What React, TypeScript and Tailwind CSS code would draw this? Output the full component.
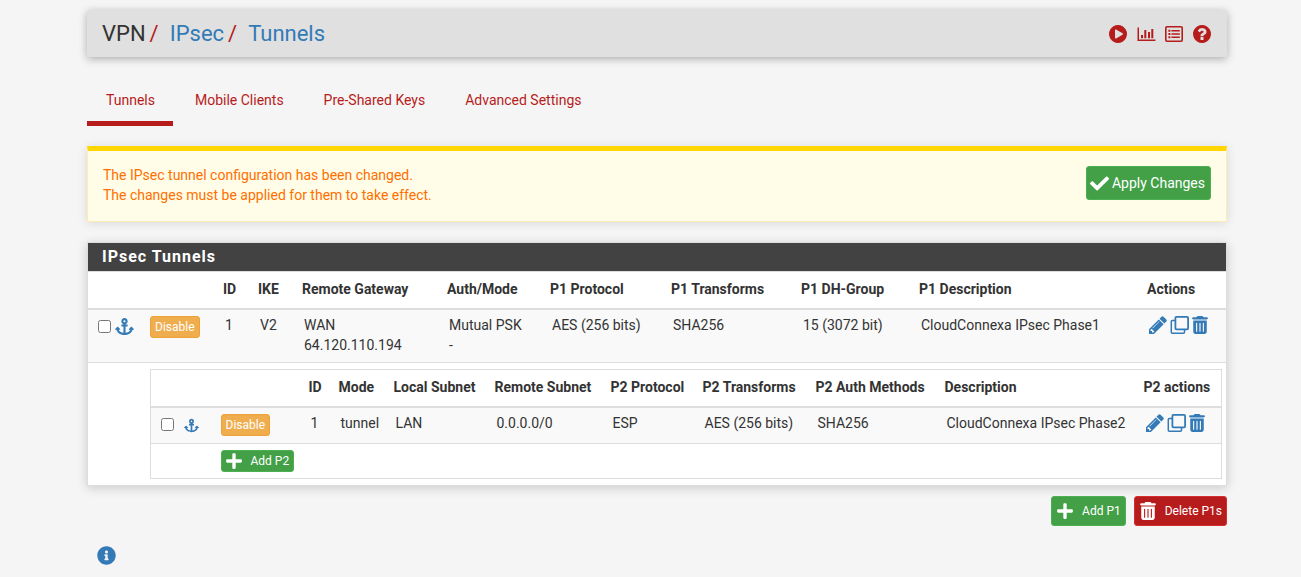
import type { ReactNode } from "react";
import { FaAnchor, FaCheck, FaInfoCircle, FaPlus } from "react-icons/fa";
import { FaTrashCan } from "react-icons/fa6";

const tabs = ["Tunnels", "Mobile Clients", "Pre-Shared Keys", "Advanced Settings"];

function PlayCircle() {
  return (
    <svg viewBox="128 128 1536 1536" fill="currentColor" className="size-[18px]" aria-hidden="true">
      <path d="M896 128q209 0 385.5 103t279.5 279.5 103 385.5-103 385.5-279.5 279.5-385.5 103-385.5-103-279.5-279.5-103-385.5 103-385.5 279.5-279.5 385.5-103zm384 823q32-18 32-55t-32-55l-544-320q-31-19-64-1-32 19-32 56v640q0 37 32 56 16 8 32 8 17 0 32-9z" />
    </svg>
  );
}

function QuestionCircle() {
  return (
    <svg viewBox="128 128 1536 1536" fill="currentColor" className="size-[18px]" aria-hidden="true">
      <path d="M1024 1376v-192q0-14-9-23t-23-9h-192q-14 0-23 9t-9 23v192q0 14 9 23t23 9h192q14 0 23-9t9-23zm256-672q0-88-55.5-163t-138.5-116-170-41q-243 0-371 213-15 24 8 42l132 100q7 6 19 6 16 0 25-12 53-68 86-92 34-24 86-24 48 0 85.5 26t37.5 59q0 38-20 61t-68 45q-63 28-115.5 86.5t-52.5 125.5v36q0 14 9 23t23 9h192q14 0 23-9t9-23q0-19 21.5-49.5t54.5-49.5q32-18 49-28.5t46-35 44.5-48 28-60.5 12.5-81zm384 192q0 209-103 385.5t-279.5 279.5-385.5 103-385.5-103-279.5-279.5-103-385.5 103-385.5 279.5-279.5 385.5-103 385.5 103 279.5 279.5 103 385.5z" />
    </svg>
  );
}

function BarChart() {
  return (
    <svg viewBox="0 0 19 16" fill="currentColor" className="h-4 w-[19px]" aria-hidden="true">
      <path d="M0.5 1.5H2v12h16.5V15H.5zM4 9h2v3.2H4zM7.3 4h2v8.2h-2zM11 6h2v6.2h-2zM14.3 3h2v9.2h-2z" />
    </svg>
  );
}

function ListPanel() {
  return (
    <svg viewBox="0 0 18 16" fill="none" className="h-4 w-[18px]" aria-hidden="true">
      <rect x="0.8" y="0.8" width="16.4" height="14.4" rx="1.2" stroke="currentColor" strokeWidth="1.6" />
      <path fill="currentColor" d="M3.4 3.7h2v2h-2zM3.4 7h2v2h-2zM3.4 10.3h2v2h-2zM6.4 3.9h8.4v1.6H6.4zM6.4 7.2h8.4v1.6H6.4zM6.4 10.5h8.4v1.6H6.4z" />
    </svg>
  );
}

function PencilIcon() {
  return (
    <svg viewBox="128 128 1536 1536" fill="currentColor" className="size-[18px]" aria-hidden="true">
      <path d="M491 1536l91-91-235-235-91 91v107h128v128h107zm523-928q0-22-22-22-10 0-17 7l-542 542q-7 7-7 17 0 22 22 22 10 0 17-7l542-542q7-7 7-17zm-54-192l416 416-832 832h-416v-416zm683 96q0 53-37 90l-166 166-416-416 166-165q36-38 90-38 53 0 91 38l235 234q37 39 37 91z" />
    </svg>
  );
}

function CloneIcon() {
  return (
    <svg viewBox="0 0 19 18" fill="none" stroke="currentColor" strokeWidth="1.8" className="h-[18px] w-[19px]" aria-hidden="true">
      <rect x="5.4" y="0.9" width="12.7" height="12.4" rx="1" />
      <path strokeWidth="1.5" d="M5 4.4H2.3a1 1 0 0 0-1 1v10.8a1 1 0 0 0 1 1h11.2a1 1 0 0 0 1-1V13.6" />
    </svg>
  );
}

function HeaderLink({ label, children }: { label: string; children: ReactNode }) {
  return (
    <a href="#" aria-label={label} className="flex w-5 justify-center">
      {children}
    </a>
  );
}

function Th({ children }: { children?: ReactNode }) {
  return <th className="px-[5px] pt-[7px] pb-[9px] text-left font-bold">{children}</th>;
}

function Td({ children }: { children?: ReactNode }) {
  return <td className="px-[7px] pt-[5px] pb-[7px] align-top">{children}</td>;
}

function DisableButton() {
  return (
    <button type="button" className="mt-px block h-[22px] rounded-[3px] border border-[#eea236] bg-[#f0ad4e] px-1 text-xs text-white">
      Disable
    </button>
  );
}

function RowActions() {
  return (
    <div className="flex h-5 items-center gap-[3px] text-[#337ab7]">
      <a href="#" aria-label="Edit"><PencilIcon /></a>
      <a href="#" aria-label="Copy"><CloneIcon /></a>
      <a href="#" aria-label="Delete"><FaTrashCan className="h-[18px] w-4" /></a>
    </div>
  );
}

function Phase2Table() {
  return (
    <table className="w-full table-fixed border border-[#ddd] whitespace-nowrap">
      <colgroup>
        <col className="w-[63px]" />
        <col className="w-[90px]" />
        <col className="w-[30px]" />
        <col className="w-[55px]" />
        <col className="w-[101px]" />
        <col className="w-[116px]" />
        <col className="w-[92px]" />
        <col className="w-[113px]" />
        <col className="w-[129px]" />
        <col />
        <col className="w-[83px]" />
      </colgroup>
      <thead>
        <tr className="border-b-2 border-[#ddd]">
          <Th />
          <Th />
          <Th>ID</Th>
          <Th>Mode</Th>
          <Th>Local Subnet</Th>
          <Th>Remote Subnet</Th>
          <Th>P2 Protocol</Th>
          <Th>P2 Transforms</Th>
          <Th>P2 Auth Methods</Th>
          <Th>Description</Th>
          <Th>P2 actions</Th>
        </tr>
      </thead>
      <tbody>
        <tr className="border-b border-[#ddd] bg-[#f9f9f9]">
          <Td>
            <div className="flex h-[22px] items-center gap-[10px] pl-[3px]">
              <input type="checkbox" aria-label="Select phase 2 entry 1" className="size-[13px]" />
              <a href="#" aria-label="Move phase 2 entries here" className="pt-[3px] text-[15px] text-[#337ab7]"><FaAnchor /></a>
            </div>
          </Td>
          <Td><DisableButton /></Td>
          <Td>1</Td>
          <Td>tunnel</Td>
          <Td>LAN</Td>
          <Td>0.0.0.0/0</Td>
          <Td>ESP</Td>
          <Td>AES (256 bits)</Td>
          <Td>SHA256</Td>
          <Td>CloudConnexa IPsec Phase2</Td>
          <Td><RowActions /></Td>
        </tr>
        <tr>
          <Td />
          <td colSpan={10} className="px-[7px] pt-[6px] pb-[6px]">
            <button type="button" className="flex h-[22px] items-center gap-2 rounded-[3px] border border-[#4caf50] bg-[#43a047] pr-1 pl-[3px] text-xs text-white">
              <FaPlus className="size-[18px]" />
              Add P2
            </button>
          </td>
        </tr>
      </tbody>
    </table>
  );
}

export default function App() {
  return (
    <div className="min-h-screen bg-[#f5f5f5] pt-[10px] pr-[74px] pb-3 pl-[87px] font-['Roboto',sans-serif] text-sm leading-5 text-[#333]">
      <header className="flex h-[47px] items-center justify-between rounded-[2px] bg-[#e0e0e0] px-[15px] shadow-[0_2px_8px_rgba(0,0,0,0.3)]">
        <nav aria-label="Breadcrumb" className="flex text-[22px] leading-6 text-[#b71c1c]">
          <span className="text-[#333]">VPN</span>
          <span className="pr-[11px] pl-1">/</span>
          <a href="#" className="text-[#337ab7]">IPsec</a>
          <span className="pr-[11px] pl-1">/</span>
          <a href="#" className="text-[#337ab7]">Tunnels</a>
        </nav>
        <div className="flex items-center gap-2 text-[#b71c1c]">
          <HeaderLink label="Service status"><PlayCircle /></HeaderLink>
          <HeaderLink label="IPsec status"><BarChart /></HeaderLink>
          <HeaderLink label="Logs"><ListPanel /></HeaderLink>
          <HeaderLink label="Help"><QuestionCircle /></HeaderLink>
        </div>
      </header>

      <nav aria-label="Sections" className="mt-[23px] flex gap-[3px] text-[#b71c1c]">
        {tabs.map((tab, index) => (
          <a
            key={tab}
            href="#"
            className={
              index === 0
                ? "border-b-[5px] border-[#b71c1c] pt-[10px] pr-[18px] pb-[11px] pl-[19px]"
                : "border-b-[5px] border-transparent pt-[10px] pr-[18px] pb-[11px] pl-[19px]"
            }
          >
            {tab}
          </a>
        ))}
      </nav>

      <section className="mt-5 flex items-start justify-between border border-t-[5px] border-[#ffecb3] border-t-[#ffd600] bg-[#fffde7] px-[15px] pt-[14px] shadow-[0_1px_10px_rgba(0,0,0,0.12)]">
        <p className="pb-4 text-[#ff6f00]">
          The IPsec tunnel configuration has been changed.
          <br />
          The changes must be applied for them to take effect.
        </p>
        <button type="button" className="mt-px flex h-[34px] items-center gap-[3px] rounded-[3px] border border-[#4caf50] bg-[#43a047] pr-[5px] pl-[3px] text-white">
          <FaCheck className="size-[19px]" />
          Apply Changes
        </button>
      </section>

      <section className="mt-5 border border-[#ddd] bg-white shadow-[0_2px_10px_rgba(0,0,0,0.18)]">
        <h2 className="bg-[#424242] px-[14px] py-1 text-base leading-5 font-bold tracking-[1px] text-white">IPsec Tunnels</h2>
        <table className="w-full table-fixed border-t border-[#ddd] whitespace-nowrap">
          <colgroup>
            <col className="w-[55px]" />
            <col className="w-[75px]" />
            <col className="w-[35px]" />
            <col className="w-[44px]" />
            <col className="w-[145px]" />
            <col className="w-[103px]" />
            <col className="w-[121px]" />
            <col className="w-[130px]" />
            <col className="w-[118px]" />
            <col />
            <col className="w-[84px]" />
          </colgroup>
          <thead>
            <tr className="border-b-2 border-[#ddd]">
              <Th />
              <Th />
              <Th>ID</Th>
              <Th>IKE</Th>
              <Th>Remote Gateway</Th>
              <Th>Auth/Mode</Th>
              <Th>P1 Protocol</Th>
              <Th>P1 Transforms</Th>
              <Th>P1 DH-Group</Th>
              <Th>P1 Description</Th>
              <Th>Actions</Th>
            </tr>
          </thead>
          <tbody>
            <tr className="border-b border-[#ddd] bg-[#f9f9f9]">
              <Td>
                <div className="flex h-[22px] items-center gap-1 pl-[3px]">
                  <input type="checkbox" aria-label="Select phase 1 entry 1" className="size-[13px]" />
                  <a href="#" aria-label="Move phase 1 entries here" className="text-[19px] text-[#337ab7]"><FaAnchor /></a>
                </div>
              </Td>
              <Td><DisableButton /></Td>
              <Td>1</Td>
              <Td>V2</Td>
              <Td>WAN<br />64.120.110.194</Td>
              <Td>Mutual PSK<br />-</Td>
              <Td>AES (256 bits)</Td>
              <Td>SHA256</Td>
              <Td>15 (3072 bit)</Td>
              <Td>CloudConnexa IPsec Phase1</Td>
              <Td><RowActions /></Td>
            </tr>
            <tr>
              <td />
              <td colSpan={10} className="pt-[6px] pr-1 pb-[6px] pl-[7px]">
                <Phase2Table />
              </td>
            </tr>
          </tbody>
        </table>
      </section>

      <div className="mt-[10px] flex justify-end gap-2 text-xs text-white">
        <button type="button" className="flex h-[30px] items-center gap-2 rounded-[3px] border border-[#4caf50] bg-[#43a047] px-1">
          <FaPlus className="size-[18px]" />
          Add P1
        </button>
        <button type="button" className="flex h-[30px] items-center gap-2 rounded-[3px] border border-[#d32f2f] bg-[#b71c1c] px-1">
          <FaTrashCan className="size-[18px]" />
          Delete P1s
        </button>
      </div>

      <button type="button" aria-label="Show information" className="mt-5 ml-[10px] block text-[19px] text-[#337ab7]">
        <FaInfoCircle />
      </button>
    </div>
  );
}
